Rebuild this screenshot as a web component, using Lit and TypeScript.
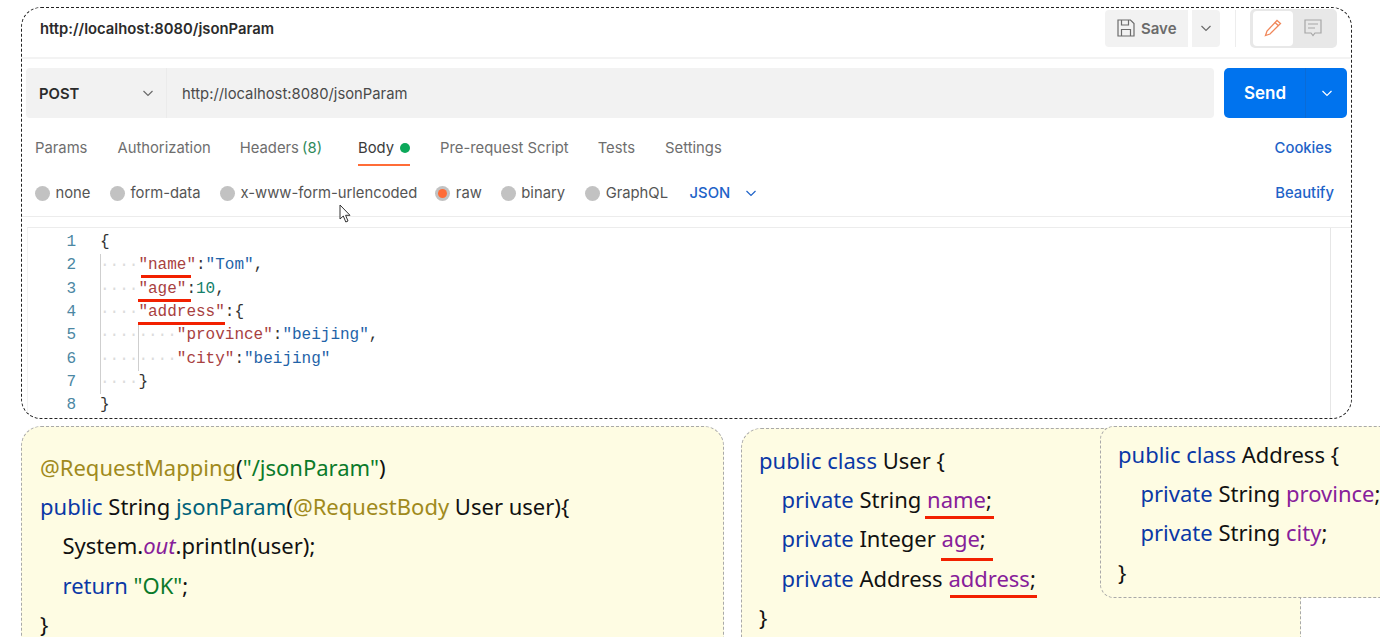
import { LitElement, html, css } from "lit";
import { customElement } from "lit/decorators.js";

const chevron = () => html`<svg width="12" height="12" viewBox="0 0 12 12" fill="none" stroke="currentColor" stroke-width="1.2"><path d="M1.5 4 L6 8.5 L10.5 4"/></svg>`;

type Tok = [string, string];
const P = "p", S = "s", N = "n", D = "d";
const codeLines: { indent: number; toks: Tok[] }[] = [
  { indent: 0, toks: [[D, "{"]] },
  { indent: 1, toks: [[P, '"name"'], [D, ":"], [S, '"Tom"'], [D, ","]] },
  { indent: 1, toks: [[P, '"age"'], [D, ":"], [N, "10"], [D, ","]] },
  { indent: 1, toks: [[P, '"address"'], [D, ":{"]] },
  { indent: 2, toks: [[P, '"province"'], [D, ":"], [S, '"beijing"'], [D, ","]] },
  { indent: 2, toks: [[P, '"city"'], [D, ":"], [S, '"beijing"']] },
  { indent: 1, toks: [[D, "}"]] },
  { indent: 0, toks: [[D, "}"]] },
];

const tabs = [
  { t: "Params", g: 30 }, { t: "Authorization", g: 29 }, { t: "Headers", extra: "(8)", g: 36 },
  { t: "Body", dot: true, g: 30 }, { t: "Pre-request Script", g: 29 }, { t: "Tests", g: 30 }, { t: "Settings", g: 0 },
];
const radios = [
  { t: "none", g: 19.5 }, { t: "form-data", g: 19.5 }, { t: "x-www-form-urlencoded", g: 18 },
  { t: "raw", on: true, g: 19 }, { t: "binary", g: 20 }, { t: "GraphQL", g: 21.5 },
];
const marks = [
  [141, 275, 50], [138, 299, 53], [138, 322, 87],
  [925, 516, 69], [941, 558, 52], [950, 595, 87],
];

@customElement("app-root")
export class AppRoot extends LitElement {
  static styles = css`
    :host { display: block; position: relative; width: 1380px; height: 637px; overflow: hidden; background: #fff; font-family: Inter, "Liberation Sans", sans-serif; }
    .pm { position: absolute; left: 21px; top: 7px; width: 1331px; height: 412px; box-sizing: border-box; border: 1px dashed #222; border-radius: 20px; display: flex; flex-direction: column; overflow: hidden; }
    .title { height: 49px; flex: none; display: flex; align-items: center; padding: 0 14px 0 18px; border-bottom: 2px solid #f3f3f3; box-sizing: content-box; }
    .title-text { font-size: 14.8px; font-weight: 600; color: #2b2b2b; flex: 1; margin-top: -8px; }
    .save { display: flex; align-items: center; gap: 6px; width: 83px; height: 37px; box-sizing: border-box; padding-left: 12px; background: #f2f2f2; border-radius: 4px 0 0 4px; color: #6b6b6b; font-weight: 600; font-size: 15px; margin-top: -9px; }
    .save-arrow { width: 28px; height: 37px; margin-left: 4px; background: #f2f2f2; color: #6b6b6b; display: flex; align-items: center; justify-content: center; margin-top: -9px; border-radius: 0 4px 4px 0; }
    .sep { width: 1px; height: 37px; background: #ededed; margin: -9px 14px 0 15px; }
    .toggle { width: 87px; height: 39px; background: #e8e8e8; border-radius: 5px; display: flex; box-sizing: border-box; padding: 2px 0 2px 3px; margin-top: -9px; }
    .seg { width: 40px; display: flex; align-items: center; justify-content: center; border-radius: 4px; }
    .seg.on { background: #fff; }
    .req { display: flex; margin: 9px 4px 0 4px; height: 50px; flex: none; }
    .method { width: 141px; flex: none; background: #f2f2f2; border-radius: 4px 0 0 4px; border-right: 1px solid #ebebeb; box-sizing: border-box; display: flex; align-items: center; justify-content: space-between; padding: 1px 12px 0 13px; font-size: 14.8px; font-weight: 600; color: #2b2b2b; }
    .method svg { color: #6b6b6b; margin-top: -1px; }
    .url { flex: 1; background: #f2f2f2; border-radius: 0 4px 4px 0; display: flex; align-items: center; padding: 1px 0 0 15px; font-size: 14.8px; color: #4a4a4a; }
    .send { width: 123px; margin-left: 10px; background: #0073ee; border-radius: 5px; color: #fff; display: flex; align-items: center; font-weight: 600; font-size: 17px; }
    .send-l { width: 82px; height: 50px; line-height: 50px; padding-left: 20px; box-sizing: border-box; flex: none; border-right: 1px solid #0a6bd6; }
    .send-a { flex: 1; display: flex; justify-content: flex-end; padding-right: 14px; }
    .tabs { display: flex; align-items: center; height: 30px; margin: 15px 19px 0 13px; font-size: 14.8px; color: #6e6e6e; flex: none; position: relative; }
    .tab { flex: none; display: flex; align-items: center; gap: 6px; white-space: nowrap; }
    .tab.active { color: #3a3a3a; position: relative; }
    .tab.active::after { content: ""; position: absolute; left: 0; right: 0; bottom: -9px; height: 2px; background: #ff6c37; }
    .green { color: #2f8a5b; margin-left: -1px; }
    .dot { width: 10px; height: 10px; border-radius: 50%; background: #0ca85a; }
    .link { margin-left: auto; color: #1e63c8; font-weight: 500; }
    .radios { display: flex; align-items: center; height: 30px; margin: 15px 17px 0 13px; font-size: 14.8px; color: #555; flex: none; }
    .radio { display: flex; align-items: center; gap: 5.5px; flex: none; white-space: nowrap; }
    .circle { width: 15px; height: 15px; border-radius: 50%; background: #c2c2c2; display: flex; align-items: center; justify-content: center; box-sizing: border-box; }
    .circle i { width: 9px; height: 9px; border-radius: 50%; background: #ff6c37; display: block; }
    .json { color: #1e63c8; font-weight: 500; display: flex; align-items: center; gap: 15px; }
    .rule1 { height: 1px; background: #ececec; margin-top: 8px; flex: none; }
    .editor { margin: 10px 0 0 5px; border-top: 1px solid #ececec; border-left: 1px solid #f2f2f2; flex: 1; position: relative; font-family: "Liberation Mono", monospace; font-size: 16px; line-height: 23.35px; padding-top: 3px; }
    .scroll { position: absolute; right: 20px; top: 0; bottom: 0; width: 1px; background: #e6e6e6; }
    .ln { display: flex; white-space: pre; }
    .num { width: 48px; text-align: right; color: #4b87a3; flex: none; }
    .code { margin-left: 24px; display: flex; }
    .guide { width: 38.4px; flex: none; border-left: 1px solid #cfcfcf; box-sizing: border-box; color: #dcdcdc; text-indent: -1px; }
    .p { color: #a8413f; } .s { color: #1f63a8; } .n { color: #15806a; } .d { color: #333; }
    .note { position: absolute; box-sizing: border-box; background: #fefce3; border: 1px dashed #a9a9a9; border-radius: 20px; font-family: "Noto Sans", sans-serif; font-size: 22px; line-height: 39.2px; color: #111; white-space: pre; }
    .n1 { left: 21px; top: 426px; width: 703px; height: 240px; padding: 21px 0 0 18px; }
    .n2 { left: 741px; top: 428px; width: 560px; height: 240px; padding: 12px 0 0 17px; }
    .n3 { left: 1100px; top: 426px; width: 320px; height: 172px; padding: 8px 0 0 17px; border-radius: 14px; }
    .in { padding-left: 22.5px; }
    .kw { color: #0a38a6; } .an { color: #a08a1c; } .st { color: #0a7a2a; } .fn { color: #00627a; } .fd { color: #87209a; } .it { font-style: italic; color: #87209a; }
    .mark { position: absolute; height: 3px; background: #f22000; }
    .cursor { position: absolute; left: 339px; top: 204px; }
  `;
  render() {
    return html`
      <section class="pm">
        <div class="title">
          <span class="title-text">http://localhost:8080/jsonParam</span>
          <div class="save">
            <svg width="18" height="18" viewBox="0 0 18 18" fill="none" stroke="#6b6b6b" stroke-width="1.2"><path d="M1 1 H13.5 L17 4.5 V17 H1 Z"/><path d="M4.5 1 V6 H11.5 V1"/><path d="M4.5 17 V10.5 H13.5 V17"/></svg>
            Save
          </div>
          <div class="save-arrow">${chevron()}</div>
          <div class="sep"></div>
          <div class="toggle">
            <div class="seg on"><svg width="18" height="18" viewBox="0 0 18 18" fill="none" stroke="#f0875a" stroke-width="1.3"><path d="M1.5 16.5 L3 12 L13 1.5 L16.5 4.5 L6 15 Z"/><path d="M11 3.5 L14.5 6.8"/></svg></div>
            <div class="seg"><svg width="18" height="18" viewBox="0 0 18 18" fill="none" stroke="#a6a6a6" stroke-width="1.2"><path d="M1 1 H17 V14 H11 L9 16.5 L7 14 H1 Z"/><path d="M4 5 H14 M4 9 H11"/></svg></div>
          </div>
        </div>
        <div class="req">
          <div class="method">POST ${chevron()}</div>
          <div class="url">http://localhost:8080/jsonParam</div>
          <div class="send"><span class="send-l">Send</span><span class="send-a">${chevron()}</span></div>
        </div>
        <div class="tabs">
          ${tabs.map((t) => html`<div class="tab ${t.dot ? "active" : ""}" style="margin-right:${t.g}px"><span>${t.t}${t.extra ? html` <span class="green">${t.extra}</span>` : ""}</span>${t.dot ? html`<span class="dot"></span>` : ""}</div>`)}
          <span class="link">Cookies</span>
        </div>
        <div class="radios">
          ${radios.map((r) => html`<label class="radio" style="margin-right:${r.g}px"><span class="circle">${r.on ? html`<i></i>` : ""}</span>${r.t}</label>`)}
          <span class="json">JSON ${chevron()}</span>
          <span class="link">Beautify</span>
        </div>
        <div class="rule1"></div>
        <div class="editor">
          <div class="scroll"></div>
          ${codeLines.map((l, i) => html`<div class="ln"><span class="num">${i + 1}</span><span class="code">${Array.from({ length: l.indent }, () => html`<span class="guide">····</span>`)}${l.toks.map(([c, t]) => html`<span class=${c}>${t}</span>`)}</span></div>`)}
        </div>
      </section>

      <div class="note n1"><div><span class="an">@RequestMapping</span>(<span class="st">"/jsonParam"</span>)</div><div><span class="kw">public</span> String <span class="fn">jsonParam</span>(<span class="an">@RequestBody</span> User user){</div><div class="in">System.<span class="it">out</span>.println(user);</div><div class="in"><span class="kw">return</span> <span class="st">"OK"</span>;</div><div>}</div></div>
      <div class="note n2"><div><span class="kw">public class</span> User {</div><div class="in"><span class="kw">private</span> String <span class="fd">name</span>;</div><div class="in"><span class="kw">private</span> Integer <span class="fd">age</span>;</div><div class="in"><span class="kw">private</span> Address <span class="fd">address</span>;</div><div>}</div></div>
      <div class="note n3"><div><span class="kw">public class</span> Address {</div><div class="in"><span class="kw">private</span> String <span class="fd">province</span>;</div><div class="in"><span class="kw">private</span> String <span class="fd">city</span>;</div><div>}</div></div>

      ${marks.map(([x, y, w]) => html`<div class="mark" style="left:${x}px;top:${y}px;width:${w}px"></div>`)}
      <svg class="cursor" width="14" height="20" viewBox="0 0 14 20"><path d="M1 1 V15 L4.3 12 L6.8 18 L9 17 L6.6 11.3 H11 Z" fill="#fff" stroke="#333" stroke-width="1"/></svg>
    `;
  }
}
